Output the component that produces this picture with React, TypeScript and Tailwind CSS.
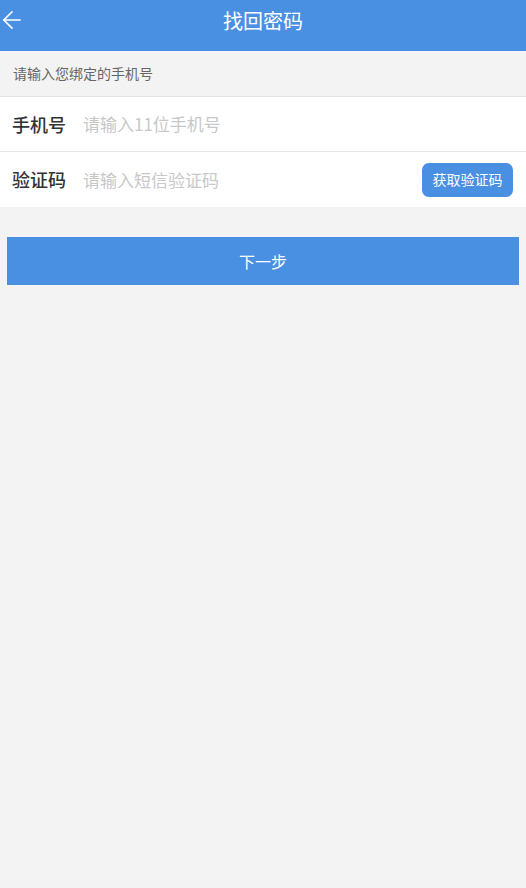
import { ArrowLeft } from "lucide-react";

const font = { fontFamily: '"Noto Sans CJK SC", "Noto Sans", sans-serif' };

export default function App() {
  return (
    <div className="min-h-[888px] w-full bg-[#f3f3f3]" style={font}>
      {/* header */}
      <div className="relative flex h-[51px] justify-center bg-[#4a90e2] pt-[9px]">
        <ArrowLeft className="absolute left-[-2px] top-[6px] h-[28px] w-[28px] text-white" strokeWidth={1.4} />
        <span className="text-[20px] leading-[24px] text-white">找回密码</span>
      </div>

      <div className="flex h-[46px] items-center border-b border-[#e2e2e2] pl-[13px] text-[14px] text-[#666666]">
        请输入您绑定的手机号
      </div>

      <div className="bg-white">
        <div className="flex h-[55px] items-center border-b border-[#e6e6e6] pl-[12px]">
          <span className="w-[71px] text-[18px] font-medium text-[#333333]">手机号</span>
          <span className="text-[17px] text-[#c8c8c8]">请输入11位手机号</span>
        </div>
        <div className="flex h-[55px] items-center pl-[12px] pr-[13px]">
          <span className="w-[71px] text-[18px] font-medium text-[#333333]">验证码</span>
          <span className="flex-1 text-[17px] text-[#c8c8c8]">请输入短信验证码</span>
          <button className="flex h-[34px] w-[91px] items-center justify-center rounded-[7px] bg-[#4a90e2] text-[14px] text-white">
            获取验证码
          </button>
        </div>
      </div>

      <div className="px-[7px] pt-[30px]">
        <button className="flex h-[48px] w-full items-center justify-center bg-[#4a90e2] text-[16px] text-white">
          下一步
        </button>
      </div>
    </div>
  );
}
